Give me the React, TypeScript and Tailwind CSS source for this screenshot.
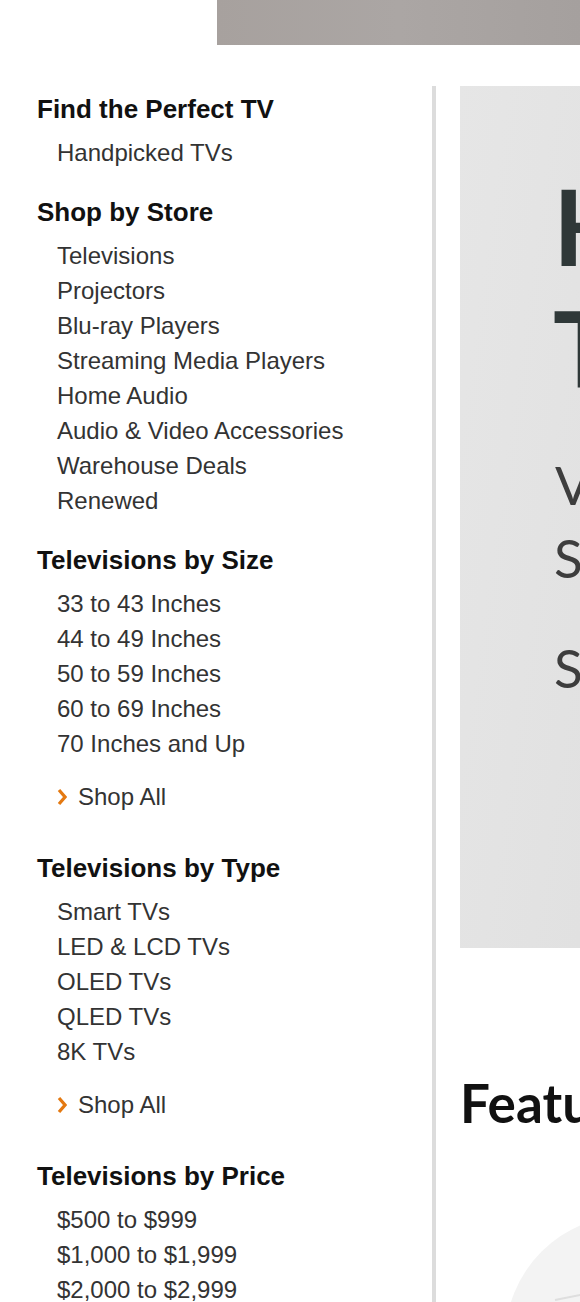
import { Fragment } from "react";

type Section = {
  title: string;
  items: string[];
  shopAll?: boolean;
};

const SECTIONS: Section[] = [
  { title: "Find the Perfect TV", items: ["Handpicked TVs"] },
  {
    title: "Shop by Store",
    items: [
      "Televisions",
      "Projectors",
      "Blu-ray Players",
      "Streaming Media Players",
      "Home Audio",
      "Audio & Video Accessories",
      "Warehouse Deals",
      "Renewed",
    ],
  },
  {
    title: "Televisions by Size",
    items: ["33 to 43 Inches", "44 to 49 Inches", "50 to 59 Inches", "60 to 69 Inches", "70 Inches and Up"],
    shopAll: true,
  },
  {
    title: "Televisions by Type",
    items: ["Smart TVs", "LED & LCD TVs", "OLED TVs", "QLED TVs", "8K TVs"],
    shopAll: true,
  },
  {
    title: "Televisions by Price",
    items: ["$500 to $999", "$1,000 to $1,999", "$2,000 to $2,999", "$3,000 & Above"],
  },
];

function Chevron() {
  return (
    <svg width="10" height="18" viewBox="0 0 10 18" className="shrink-0">
      <path d="M2 2 L8 9 L2 16" fill="none" stroke="#e47911" strokeWidth="3.2" strokeLinejoin="miter" />
    </svg>
  );
}

function NavSection({ section, last }: { section: Section; last: boolean }) {
  return (
    <section className={last ? "" : section.shopAll ? "mb-[38px]" : "mb-[26px]"}>
      <h2 className="text-[26px] leading-[32px] font-bold text-[#111] mb-[10px]">{section.title}</h2>
      <ul className="pl-[20px]">
        {section.items.map((item) => (
          <li key={item} className="text-[24px] leading-[35px] text-[#333] whitespace-nowrap">
            {item}
          </li>
        ))}
      </ul>
      {section.shopAll && (
        <div className="mt-[18px] pl-[20px] flex items-center gap-[11px] text-[24px] leading-[35px] text-[#333]">
          <Chevron />
          <span>Shop All</span>
        </div>
      )}
    </section>
  );
}

export default function App() {
  return (
    <div className="w-[580px] h-[1302px] overflow-hidden bg-white font-['Liberation_Sans',Arial,sans-serif]">
      {/* ─── Top banner strip ─── */}
      <div className="flex justify-end">
        <div className="w-[363px] h-[45px] bg-gradient-to-r from-[#a7a19e] via-[#aba6a4] to-[#a5a09e]" />
      </div>

      <div className="flex mt-[41px] h-[1216px]">
        {/* ─── Left nav ─── */}
        <aside className="w-[432px] shrink-0 pl-[37px] pt-[7px]">
          {SECTIONS.map((s, i) => (
            <Fragment key={s.title}>
              <NavSection section={s} last={i === SECTIONS.length - 1} />
            </Fragment>
          ))}
        </aside>

        <div className="w-[4px] shrink-0 bg-[#dcdcdc]" />

        {/* ─── Main content ─── */}
        <main className="flex-1 min-w-0 pl-[24px] overflow-hidden">
          <div className="h-[862px] bg-gradient-to-br from-[#e6e6e6] to-[#e1e1e1] overflow-hidden pl-[93px] pt-[78px] font-['Lato',sans-serif] whitespace-nowrap">
            <div className="text-[106px] leading-[122px] font-bold text-[#2f3838]">Holiday</div>
            <div className="text-[106px] leading-[122px] font-bold text-[#2f3838]">TV Deals</div>
            <div className="mt-[50px] pl-[2px] text-[53px] leading-none text-[#3d3d3d]">View the latest</div>
            <div className="mt-[20px] pl-[1px] text-[53px] leading-none text-[#3d3d3d]">Save on top brands</div>
            <div className="mt-[57px] pl-[1px] text-[53px] leading-none text-[#3d3d3d]">Shop now</div>
          </div>

          <h2 className="mt-[128px] text-[53px] leading-none font-bold text-[#111] whitespace-nowrap font-['Lato',sans-serif]">
            Featured Deals
          </h2>

          <svg width="120" height="173" viewBox="0 0 120 173" className="block">
            <circle cx="170" cy="211" r="125" fill="#f3f3f3" />
            <path d="M95 171 L125 165" stroke="#dedede" strokeWidth="2" />
          </svg>
        </main>
      </div>
    </div>
  );
}
